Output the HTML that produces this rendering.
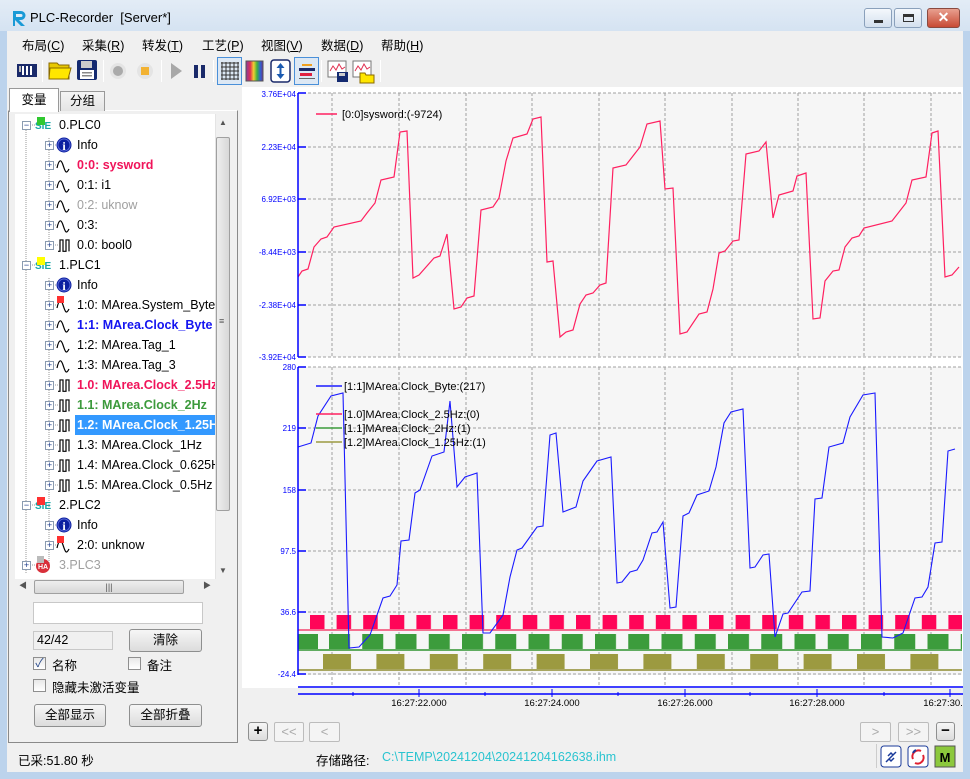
<!DOCTYPE html>
<html><head><meta charset="utf-8">
<style>
*{box-sizing:border-box;margin:0;padding:0}
body{width:970px;height:779px;overflow:hidden;background:#bcd3ec;font-family:"Liberation Sans","Noto Sans CJK SC",sans-serif;font-size:12px;color:#000;position:relative}
.a{position:absolute}
#win{left:7px;top:31px;width:956px;height:741px;background:#f0f0f0}
.menu span{position:absolute;top:4px;font-size:12.5px}
.tb{position:absolute;top:59px;height:24px}
.sep{position:absolute;top:60px;width:1px;height:22px;background:#c8c8c8;border-right:1px solid #fff}
.tree div.r{position:absolute;height:20px;line-height:20px;font-size:12.5px;white-space:nowrap}
.pb{position:absolute;width:9px;height:9px;border:1px solid #8a9bb0;background:#fff;font-size:9px;line-height:7px;text-align:center;color:#1c3c8c}
.btn{position:absolute;border:1px solid #8e8f8f;border-radius:3px;background:linear-gradient(#f6f6f6,#dcdcdc);text-align:center;font-size:12.5px}
.nb{position:absolute;top:722px;height:20px;border:1px solid #bcbcbc;border-radius:2px;background:#f4f4f4;color:#aaa;text-align:center;line-height:17px;font-size:13px}
.cb{position:absolute;width:13px;height:13px;border:1px solid #8f8f8f;background:linear-gradient(#e8e8e8,#fff)}
</style></head><body>
<!-- title bar -->
<div class="a" style="left:0;top:0;width:970px;height:31px;background:linear-gradient(#e3ecf6,#d5e3f2)"></div>
<svg class="a" style="left:10px;top:9px" width="18" height="18"><path d="M3 2h8a4.5 4.5 0 0 1 0 9h-2l6 6h-4l-6-6v6H3z" fill="#1a9ad6"/><path d="M6 5h5a1.5 1.5 0 0 1 0 3H6z" fill="#e3ecf6"/></svg>
<div class="a" style="left:30px;top:10px;font-size:13px">PLC-Recorder &nbsp;[Server*]</div>
<div class="a" style="left:864px;top:8px;width:28px;height:20px;border:1px solid #8aa0bb;border-radius:3px;background:linear-gradient(#f4f8fc,#d4e0ee)"><div class="a" style="left:9px;top:11px;width:9px;height:3px;background:#333"></div></div>
<div class="a" style="left:894px;top:8px;width:28px;height:20px;border:1px solid #8aa0bb;border-radius:3px;background:linear-gradient(#f4f8fc,#d4e0ee)"><div class="a" style="left:8px;top:5px;width:11px;height:8px;border:1px solid #333;border-top-width:3px"></div></div>
<div class="a" style="left:927px;top:8px;width:33px;height:20px;border:1px solid #8a4a40;border-radius:3px;background:linear-gradient(#e8a090,#c84a34);color:#fff;text-align:center;font-weight:bold;font-size:14px;line-height:17px">✕</div>

<div id="win" class="a"></div>
<!-- menu -->
<div class="menu a" style="left:0;top:31px;width:970px;height:24px">
<span style="left:22px">布局(<u>C</u>)</span><span style="left:82px">采集(<u>R</u>)</span><span style="left:142px">转发(<u>T</u>)</span><span style="left:202px">工艺(<u>P</u>)</span><span style="left:261px">视图(<u>V</u>)</span><span style="left:321px">数据(<u>D</u>)</span><span style="left:381px">帮助(<u>H</u>)</span>
</div>
<!-- toolbar -->
<svg class="a" style="left:0;top:55px" width="400" height="32">
<rect x="17" y="9" width="20" height="13" fill="#1a2a6a"/><rect x="22" y="11" width="2" height="9" fill="#fff"/><rect x="26" y="11" width="2" height="9" fill="#fff"/><rect x="30" y="11" width="2" height="9" fill="#fff"/><rect x="19" y="11" width="2" height="6" fill="#bbb"/>
<path d="M49 8h8l2 2h10v14H49z" fill="#e8c800" stroke="#8a6a00"/><path d="M50 13h21l-3 11H49z" fill="#ffe600" stroke="#8a6a00"/>
<rect x="77" y="5" width="20" height="20" rx="2" fill="#142a70"/><rect x="81" y="6" width="11" height="7" fill="#ccc"/><rect x="80" y="15" width="14" height="9" fill="#fff"/><rect x="82" y="17" width="10" height="1.5" fill="#888"/><rect x="82" y="20" width="10" height="1.5" fill="#888"/>
<circle cx="118" cy="16" r="8" fill="#e4e4e4"/><circle cx="118" cy="16" r="5" fill="#aaa"/>
<circle cx="145" cy="16" r="8" fill="#e4e4e4"/><rect x="141" y="12" width="8" height="8" fill="#f2b233"/>
<path d="M171 8l11 8-11 8z" fill="#a8a8a8"/>
<rect x="194" y="10" width="4" height="13" fill="#1a2a6a"/><rect x="201" y="10" width="4" height="13" fill="#1a2a6a"/>
<rect x="217.5" y="2.5" width="24" height="27" fill="#dde8f4" stroke="#4a90d9"/>
<path d="M222 7v18M226 7v18M230 7v18M234 7v18M238 7v18M221 8h18M221 12h18M221 16h18M221 20h18M221 24h18" stroke="#333" stroke-width="1"/>
<defs><linearGradient id="rb" x1="0" x2="1"><stop offset="0" stop-color="#8a3aa0"/><stop offset=".25" stop-color="#e03050"/><stop offset=".45" stop-color="#f0d030"/><stop offset=".65" stop-color="#40b040"/><stop offset=".85" stop-color="#3060d0"/><stop offset="1" stop-color="#703090"/></linearGradient></defs>
<rect x="246" y="6" width="17" height="20" fill="url(#rb)" stroke="#555"/>
<rect x="271" y="5" width="19" height="22" rx="3" fill="#fff" stroke="#1a2a6a" stroke-width="1.5"/><path d="M280.5 8l-4 5h8zM280.5 24l-4-5h8z" fill="#1a5ab0"/><rect x="279.5" y="12" width="2" height="8" fill="#1a5ab0"/>
<rect x="294.5" y="2.5" width="24" height="27" fill="#dde8f4" stroke="#4a90d9"/>
<rect x="302" y="9" width="10" height="2" fill="#f0a020"/><rect x="299" y="13" width="16" height="3" fill="#1a2a6a"/><rect x="300" y="18" width="12" height="3" fill="#e02040"/><rect x="299" y="23" width="16" height="1" fill="#666"/>
<rect x="328" y="6" width="18" height="16" fill="#fff" stroke="#777"/><path d="M330 16l3-5 3 4 3-6 3 5 3-2" stroke="#e03050" fill="none"/><rect x="337" y="17" width="11" height="10" fill="#142a70"/><rect x="339" y="18" width="6" height="3" fill="#ccc"/>
<rect x="353" y="6" width="18" height="16" fill="#fff" stroke="#777"/><path d="M355 16l3-5 3 4 3-6 3 5 3-2" stroke="#e03050" fill="none"/><path d="M360 18h5l1 2h8v8h-14z" fill="#ffe600" stroke="#8a6a00"/>
</svg>
<div class="sep" style="left:42px"></div><div class="sep" style="left:103px"></div><div class="sep" style="left:161px"></div><div class="sep" style="left:213px"></div><div class="sep" style="left:321px"></div><div class="sep" style="left:380px"></div>

<!-- left panel -->
<div class="a" style="left:8px;top:110px;width:230px;height:633px;border:1px solid #8a8a8a;border-top-color:#fff;background:#f0f0f0"></div>
<div class="a" style="left:9px;top:88px;width:50px;height:24px;border:1px solid #999;border-bottom:none;background:#fff;text-align:center;line-height:22px;font-size:12.5px">变量</div>
<div class="a" style="left:60px;top:91px;width:45px;height:20px;border:1px solid #999;border-bottom:none;background:linear-gradient(#f4f4f4,#e4e4e4);text-align:center;line-height:19px;font-size:12.5px">分组</div>
<div class="a tree" style="left:15px;top:114px;width:200px;height:465px;background:#fff;overflow:hidden">
<svg class="a" style="left:0;top:0" width="200" height="465"><path d="M11 16V460M34 24V132M34 164V452" stroke="#999" stroke-dasharray="1 1"/>
<g stroke="#999" stroke-dasharray="1 1"><path d="M11 11h9M11 151h9M11 391h9M11 451h9"/>
<path d="M34 31h9M34 51h9M34 71h9M34 91h9M34 111h9M34 131h9M34 171h9M34 191h9M34 211h9M34 231h9M34 251h9M34 271h9M34 291h9M34 311h9M34 331h9M34 351h9M34 371h9M34 411h9M34 431h9"/></g>
</svg>
</div>
<svg class="a" style="left:15px;top:114px" width="200" height="465">
<defs>
<g id="sine"><path d="M0 9c2-9 4-9 6-3s3 10 6 4" stroke="#000" fill="none" stroke-width="1.2" transform="translate(0,-1)"/></g>
<g id="sq"><path d="M0 13h2V1h3v12h3V1h3v12" stroke="#000" fill="none" stroke-width="1.2" transform="translate(1,3) scale(1,0.95)"/></g>
<g id="inf"><circle cx="8" cy="8" r="7.5" fill="#0a1ea0"/><circle cx="8" cy="8" r="6" fill="none" stroke="#5a6ad8"/><text x="8" y="13" font-family="Liberation Serif" font-weight="bold" font-size="12" fill="#fff" text-anchor="middle">i</text></g>
<g id="sie"><text x="0" y="10" font-family="Liberation Sans" font-weight="bold" font-size="10" fill="#1aa8a8">SIE</text></g>
</defs>
<!-- PLC0 -->
<use href="#sie" x="20" y="5"/><rect x="22" y="3" width="8" height="8" fill="#30c830"/>
<use href="#inf" x="41" y="23"/>
<use href="#sine" x="42" y="46"/><use href="#sine" x="42" y="66"/><use href="#sine" x="42" y="86"/><use href="#sine" x="42" y="106"/><use href="#sq" x="42" y="122"/>
<use href="#sie" x="20" y="145"/><rect x="22" y="143" width="8" height="8" fill="#ffff00"/>
<use href="#inf" x="41" y="163"/>
<use href="#sine" x="42" y="186"/><rect x="42" y="182" width="7" height="7" fill="#ff3030"/>
<use href="#sine" x="42" y="206"/><use href="#sine" x="42" y="226"/><use href="#sine" x="42" y="246"/>
<use href="#sq" x="42" y="262"/><use href="#sq" x="42" y="282"/><use href="#sq" x="42" y="302"/><use href="#sq" x="42" y="322"/><use href="#sq" x="42" y="342"/><use href="#sq" x="42" y="362"/>
<use href="#sie" x="20" y="385"/><rect x="22" y="383" width="8" height="8" fill="#ff3030"/>
<use href="#inf" x="41" y="403"/>
<use href="#sine" x="42" y="426"/><rect x="42" y="422" width="7" height="7" fill="#ff3030"/>
<circle cx="28" cy="452" r="7" fill="#d8303a"/><text x="28" y="455" font-size="7" font-weight="bold" fill="#fff" text-anchor="middle" font-family="Liberation Sans">HA</text><rect x="22" y="442" width="7" height="7" fill="#bbb"/>
</svg>
<div class="a tree" style="left:15px;top:114px;width:200px;height:465px;overflow:hidden">
<div class="pb" style="left:7px;top:7px">−</div><div class="r" style="left:44px;top:1px">0.PLC0</div>
<div class="pb" style="left:30px;top:27px">+</div><div class="r" style="left:62px;top:21px">Info</div>
<div class="pb" style="left:30px;top:47px">+</div><div class="r" style="left:62px;top:41px;color:#f0145a;font-weight:bold">0:0: sysword</div>
<div class="pb" style="left:30px;top:67px">+</div><div class="r" style="left:62px;top:61px">0:1: i1</div>
<div class="pb" style="left:30px;top:87px">+</div><div class="r" style="left:62px;top:81px;color:#a0a0a0">0:2: uknow</div>
<div class="pb" style="left:30px;top:107px">+</div><div class="r" style="left:62px;top:101px">0:3:</div>
<div class="pb" style="left:30px;top:127px">+</div><div class="r" style="left:62px;top:121px">0.0: bool0</div>
<div class="pb" style="left:7px;top:147px">−</div><div class="r" style="left:44px;top:141px">1.PLC1</div>
<div class="pb" style="left:30px;top:167px">+</div><div class="r" style="left:62px;top:161px">Info</div>
<div class="pb" style="left:30px;top:187px">+</div><div class="r" style="left:62px;top:181px">1:0: MArea.System_Byte</div>
<div class="pb" style="left:30px;top:207px">+</div><div class="r" style="left:62px;top:201px;color:#1414f0;font-weight:bold">1:1: MArea.Clock_Byte</div>
<div class="pb" style="left:30px;top:227px">+</div><div class="r" style="left:62px;top:221px">1:2: MArea.Tag_1</div>
<div class="pb" style="left:30px;top:247px">+</div><div class="r" style="left:62px;top:241px">1:3: MArea.Tag_3</div>
<div class="pb" style="left:30px;top:267px">+</div><div class="r" style="left:62px;top:261px;color:#f0145a;font-weight:bold">1.0: MArea.Clock_2.5Hz</div>
<div class="pb" style="left:30px;top:287px">+</div><div class="r" style="left:62px;top:281px;color:#3c9a3c;font-weight:bold">1.1: MArea.Clock_2Hz</div>
<div class="pb" style="left:30px;top:307px">+</div><div class="r" style="left:60px;top:301px;width:140px;padding-left:2px;background:#3399ff;color:#fff;font-weight:bold">1.2: MArea.Clock_1.25Hz</div>
<div class="pb" style="left:30px;top:327px">+</div><div class="r" style="left:62px;top:321px">1.3: MArea.Clock_1Hz</div>
<div class="pb" style="left:30px;top:347px">+</div><div class="r" style="left:62px;top:341px">1.4: MArea.Clock_0.625Hz</div>
<div class="pb" style="left:30px;top:367px">+</div><div class="r" style="left:62px;top:361px">1.5: MArea.Clock_0.5Hz</div>
<div class="pb" style="left:7px;top:387px">−</div><div class="r" style="left:44px;top:381px">2.PLC2</div>
<div class="pb" style="left:30px;top:407px">+</div><div class="r" style="left:62px;top:401px">Info</div>
<div class="pb" style="left:30px;top:427px">+</div><div class="r" style="left:62px;top:421px">2:0: unknow</div>
<div class="pb" style="left:7px;top:447px">+</div><div class="r" style="left:44px;top:441px;color:#a0a0a0">3.PLC3</div>
</div>
<!-- vscroll -->
<div class="a" style="left:215px;top:114px;width:16px;height:465px;background:#f0f0f0;border-left:1px solid #e4e4e4"></div>
<div class="a" style="left:219px;top:118px;font-size:8px;color:#555">▲</div>
<div class="a" style="left:216px;top:137px;width:14px;height:374px;border:1px solid #a0a0a0;border-radius:2px;background:linear-gradient(90deg,#eee,#d8d8d8)"></div>
<div class="a" style="left:219px;top:316px;font-size:9px;color:#555">≡</div>
<div class="a" style="left:219px;top:566px;font-size:8px;color:#555">▼</div>
<!-- hscroll -->
<div class="a" style="left:15px;top:579px;width:200px;height:15px;background:#f0f0f0"></div>
<div class="a" style="left:19px;top:580px;font-size:8px;color:#555">◀</div>
<div class="a" style="left:34px;top:580px;width:150px;height:14px;border:1px solid #a0a0a0;border-radius:2px;background:linear-gradient(#eee,#d8d8d8);text-align:center;font-size:9px;line-height:12px;color:#555">|||</div>
<div class="a" style="left:203px;top:580px;font-size:8px;color:#555">▶</div>
<!-- controls -->
<div class="a" style="left:33px;top:602px;width:170px;height:22px;border:1px solid #c8c8c8;background:#fff"></div>
<div class="a" style="left:33px;top:631px;width:80px;height:19px;border:1px solid #c8c8c8;background:#f0f0f0;padding-left:3px;line-height:17px;font-size:12.5px">42/42</div>
<div class="btn" style="left:129px;top:629px;width:73px;height:23px;line-height:21px">清除</div>
<div class="cb" style="left:33px;top:657px"><div style="font-size:12px;line-height:11px;color:#2a4a8a;text-align:center">✓</div></div>
<div class="a" style="left:52px;top:655px;font-size:12.5px">名称</div>
<div class="cb" style="left:128px;top:657px"></div><div class="a" style="left:147px;top:655px;font-size:12.5px">备注</div>
<div class="cb" style="left:33px;top:679px"></div><div class="a" style="left:52px;top:677px;font-size:12.5px">隐藏未激活变量</div>
<div class="btn" style="left:34px;top:704px;width:72px;height:23px;line-height:21px">全部显示</div>
<div class="btn" style="left:129px;top:704px;width:73px;height:23px;line-height:21px">全部折叠</div>

<!-- chart -->
<div class="a" style="left:242px;top:87px;width:721px;height:601px;background:#fff"></div>
<svg class="a" style="left:0;top:0" width="970" height="779" font-family="Liberation Sans">
<defs>
<pattern id="pk" patternUnits="userSpaceOnUse" x="310" y="0" width="26.6" height="779"><rect x="0" y="615" width="14.5" height="16" fill="#ff0558"/></pattern>
<pattern id="gr" patternUnits="userSpaceOnUse" x="329" y="0" width="33.25" height="779"><rect x="0" y="634" width="21" height="17" fill="#3c9c3c"/></pattern>
<pattern id="ol" patternUnits="userSpaceOnUse" x="323" y="0" width="53.4" height="779"><rect x="0" y="654" width="28" height="17" fill="#9c9a40"/></pattern>
</defs>
<rect x="298" y="93" width="664" height="264" fill="#f6f6f6"/>
<rect x="298" y="367" width="664" height="308" fill="#f6f6f6"/>
<g stroke="#a0a0a0" stroke-dasharray="3 2">
<path d="M298 93H962M298 147H962M298 199H962M298 252H962M298 305H962M298 357H962M298 367H962M298 428H962M298 490H962M298 551H962M298 612H962M298 674H962"/>
<path d="M332 93V357M399 93V357M466 93V357M532 93V357M599 93V357M665 93V357M732 93V357M798 93V357M864 93V357M931 93V357"/>
<path d="M332 367V686M399 367V686M466 367V686M532 367V686M599 367V686M665 367V686M732 367V686M798 367V686M864 367V686M931 367V686"/>
</g>
<rect x="298" y="615" width="664" height="16" fill="url(#pk)"/>
<rect x="298" y="629" width="664" height="2" fill="#f47090"/>
<rect x="298" y="634" width="664" height="17" fill="url(#gr)"/>
<rect x="298" y="634" width="20" height="17" fill="#3c9c3c"/>
<rect x="298" y="649" width="664" height="2" fill="#60ac60"/>
<rect x="298" y="654" width="664" height="17" fill="url(#ol)"/>
<rect x="298" y="669" width="664" height="2" fill="#a8a660"/>
<polyline fill="none" stroke="#ff2060" stroke-width="1.2" points="298,277 302,271 308,269 314,247 321,239 327,237 334,227 361,221 367,213 375,203 381,180 394,177 400,132 407,131 413,278 419,275 434,258 440,256 447,234 454,309 461,307 467,298 474,296 481,210 493,207 499,198 506,161 513,138 527,134 533,119 541,117 547,262 553,261 560,337 566,332 573,330 580,304 586,295 593,293 600,285 606,283 613,168 626,165 640,147 647,124 660,121 665,189 673,188 680,334 687,332 699,314 707,312 713,289 719,253 725,251 733,241 739,240 746,154 759,151 766,142 773,218 779,195 793,191 797,176 806,173 813,319 820,318 825,281 833,271 839,270 845,247 852,238 859,236 864,228 892,221 906,203 912,180 926,177 932,133 938,131 945,277 952,275 959,267"/>
<polyline fill="none" stroke="#1a1aff" stroke-width="1.1" points="298,447 311,443 318,416 331,396 343,393 349,648 359,647 370,635 383,598 390,596 397,585 401,541 409,540 415,493 420,490 432,456 444,452 450,401 457,487 465,477 477,473 483,633 490,633 503,615 510,577 517,550 522,548 537,527 543,526 550,435 556,433 563,512 576,507 583,481 597,461 611,457 617,583 622,582 630,572 637,570 643,560 652,533 657,532 663,522 670,608 676,607 683,516 689,513 697,495 709,491 716,467 724,423 731,412 743,409 750,568 755,567 763,555 769,554 775,637 783,614 788,613 802,592 810,591 815,499 822,498 829,447 843,443 850,417 863,395 875,393 882,637 893,638 903,633 915,598 922,597 928,587 935,543 942,542 948,451 955,449"/>
<g stroke="#0000ff" stroke-width="1.5"><path d="M298 93V357M298 367V675"/>
<path d="M298 93h8M298 147h8M298 199h8M298 252h8M298 305h8M298 357h8M298 367h8M298 428h8M298 490h8M298 551h8M298 612h8M298 674h8"/>
<path d="M298 687H963M298 694H963"/></g>
<path d="M419 689v8M552 689v8M685 689v8M817 689v8M950 689v8M353 692v4M485 692v4M618 692v4M750 692v4M884 692v4" stroke="#0000ff"/>
<g font-size="8" fill="#0000ff" text-anchor="end">
<text x="296" y="97">3.76E+04</text><text x="296" y="150">2.23E+04</text><text x="296" y="202">6.92E+03</text><text x="296" y="255">-8.44E+03</text><text x="296" y="308">-2.38E+04</text><text x="296" y="360">-3.92E+04</text>
<text x="296" y="370">280</text><text x="296" y="431">219</text><text x="296" y="493">158</text><text x="296" y="554">97.5</text><text x="296" y="615">36.6</text><text x="296" y="677">-24.4</text></g>
<g font-size="9.5" fill="#000" text-anchor="middle"><text x="419" y="706">16:27:22.000</text><text x="552" y="706">16:27:24.000</text><text x="685" y="706">16:27:26.000</text><text x="817" y="706">16:27:28.000</text><text x="943" y="706">16:27:30.</text></g>
<g font-size="11"><path d="M316 114h21" stroke="#ff2060" stroke-width="1.5"/><text x="342" y="118">[0:0]sysword:(-9724)</text>
<path d="M316 386h26" stroke="#1a1aff" stroke-width="1.5"/><text x="344" y="390">[1:1]MArea.Clock_Byte:(217)</text>
<path d="M316 414h26" stroke="#ff2060" stroke-width="1.5"/><text x="344" y="418">[1.0]MArea.Clock_2.5Hz:(0)</text>
<path d="M316 428h26" stroke="#3c9c3c" stroke-width="1.5"/><text x="344" y="432">[1.1]MArea.Clock_2Hz:(1)</text>
<path d="M316 442h26" stroke="#9c9a40" stroke-width="1.5"/><text x="344" y="446">[1.2]MArea.Clock_1.25Hz:(1)</text></g>
</svg>
<!-- nav buttons -->
<div class="btn" style="left:248px;top:722px;width:20px;height:19px;line-height:16px;font-size:15px;font-weight:bold;color:#000">+</div>
<div class="nb" style="left:274px;width:30px">&lt;&lt;</div>
<div class="nb" style="left:309px;width:31px">&lt;</div>
<div class="nb" style="left:860px;width:31px">&gt;</div>
<div class="nb" style="left:898px;width:31px">&gt;&gt;</div>
<div class="btn" style="left:936px;top:722px;width:19px;height:19px;line-height:16px;font-size:15px;font-weight:bold">−</div>
<!-- status -->
<div class="a" style="left:18px;top:750px;font-size:12.5px">已采:51.80 秒</div>
<div class="a" style="left:316px;top:750px;font-size:12.5px">存储路径:</div>
<div class="a" style="left:382px;top:750px;font-size:12.5px;color:#2ac4d0">C:\TEMP\20241204\20241204162638.ihm</div>
<div class="a" style="left:876px;top:744px;width:1px;height:24px;background:#ccc"></div>
<svg class="a" style="left:880px;top:745px" width="80" height="24">
<rect x="1" y="1" width="20" height="21" rx="3" fill="#fff" stroke="#1a3a9a"/><path d="M6 17l10-10M8 11l3-3 2 2M14 13l-3 3-2-2" stroke="#1a3a9a" stroke-width="1.5" fill="none"/>
<rect x="28" y="1" width="20" height="21" rx="3" fill="#fff" stroke="#1a3a9a"/><path d="M33 14a6 6 0 0 1 8-8M43 10a6 6 0 0 1-8 8" stroke="#e02030" stroke-width="2" fill="none"/><path d="M33 8a6 6 0 0 1 3-3" stroke="#1a3a9a" stroke-width="2"/>
<rect x="55" y="1" width="20" height="21" fill="#8cc83c" stroke="#555"/><text x="65" y="17" font-family="Liberation Sans" font-weight="bold" font-size="13" text-anchor="middle">M</text>
</svg>
</body></html>
